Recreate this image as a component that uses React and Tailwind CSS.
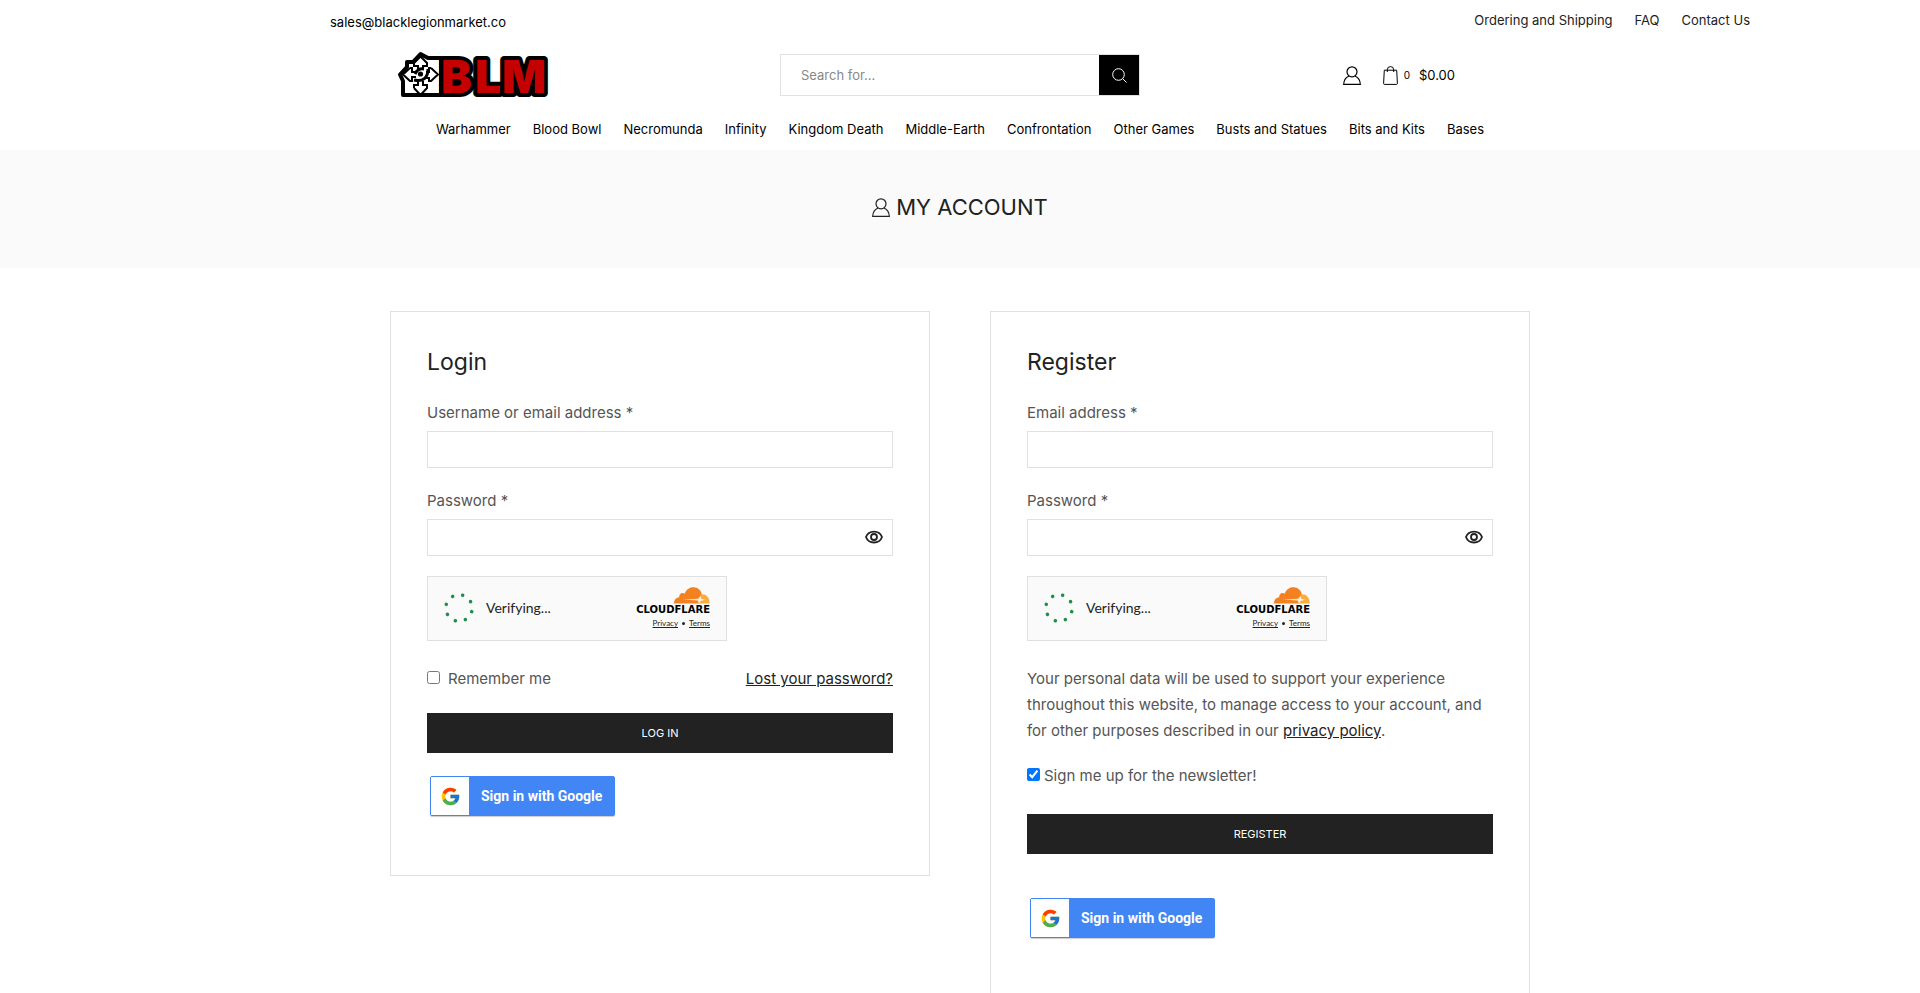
import { useState } from "react";
import { FcGoogle } from "react-icons/fc";

const topLinks = ["Ordering and Shipping", "FAQ", "Contact Us"];

const navLinks = [
  "Warhammer",
  "Blood Bowl",
  "Necromunda",
  "Infinity",
  "Kingdom Death",
  "Middle-Earth",
  "Confrontation",
  "Other Games",
  "Busts and Statues",
  "Bits and Kits",
  "Bases",
];

const spinnerDots = [0, 45, 90, 135, 180, 225, 270, 315];

function UserIcon() {
  return (
    <svg viewBox="0 0 18 19" className="w-[18px] h-[19px]" fill="none" stroke="currentColor" strokeWidth="1.200" aria-hidden="true">
      <circle cx="9" cy="5.800" r="5" />
      <path d="M6 10C3 11.300 .9 14 .7 18.300H17.300C17.100 14 15 11.300 12 10" />
    </svg>
  );
}

function BagIcon() {
  return (
    <svg viewBox="0 0 15 19" className="w-[15px] h-[19px]" fill="none" stroke="currentColor" aria-hidden="true">
      <path d="M1.300 4.200H13.700L14.400 17.400Q14.400 18.400 13.400 18.400H1.600Q.6 18.400 .6 17.400Z" />
      <path d="M4.300 6V3.800a3.200 3.200 0 0 1 6.400 0V6" />
    </svg>
  );
}

function Logo() {
  return (
    <svg viewBox="0 0 150 46" className="w-[150px] h-[46px] overflow-visible" role="img" aria-label="BLM">
      <path
        d="M22.500 2L30 6H43V43H5V29L2 22.500L9 15V10H15Z"
        fill="#fff"
        stroke="#000"
        strokeWidth="4"
        strokeLinejoin="round"
      />
      <g fill="none" stroke="#000" strokeWidth="2">
        <path d="M16 11L22.500 4.500L29 11V14H25V18M16 11V14H20V17" />
        <path d="M12 16L5 22.500L12 29H14V25H18M12 16H14V20H17" />
        <path d="M33 16L40 22.500L33 29H31V26H28M33 16H31V20H28" />
        <path d="M16 36L22.500 43L29 36V33H25V29M16 36V33H20V29" />
        <path d="M30 17C30 26 25 30 16 28" strokeWidth="3" />
        <path d="M17 22Q20 16 26 17" strokeWidth="3" />
      </g>
      <circle cx="22.500" cy="22" r="2.600" fill="#000" />
      <text
        x="43 77 104"
        y="41"
        fill="#c40000"
        stroke="#000"
        strokeWidth="8"
        strokeLinejoin="round"
        paintOrder="stroke"
        className="font-[Inter] text-[46px] font-black"
      >
        BLM
      </text>
    </svg>
  );
}

function EyeIcon() {
  return (
    <svg viewBox="0 0 18 14" className="w-[18px] h-[14px]" fill="none" stroke="currentColor" strokeWidth="1.800" aria-hidden="true">
      <path d="M1 7C3.500 -.3 14.500 -.3 17 7C14.500 14.300 3.500 14.300 1 7Z" />
      <circle cx="9" cy="7" r="3" />
    </svg>
  );
}

function Field({ id, label, type = "text" }) {
  return (
    <div className="mb-5">
      <label htmlFor={id} className="block mb-[5px]">
        {label}
      </label>
      <input
        id={id}
        type={type}
        className="block w-full h-[37px] px-3 border border-[#e1e1e1] bg-white outline-none focus:border-[#222]"
      />
    </div>
  );
}

function PasswordField({ id }) {
  const [visible, setVisible] = useState(false);

  return (
    <div className="mb-5">
      <label htmlFor={id} className="block mb-[5px]">
        Password *
      </label>
      <div className="flex h-[37px] border border-[#e1e1e1] bg-white focus-within:border-[#222]">
        <input
          id={id}
          type={visible ? "text" : "password"}
          className="flex-1 min-w-0 px-3 outline-none"
        />
        <button
          type="button"
          aria-label="Show password"
          onClick={() => setVisible(!visible)}
          className="px-[9px] pb-[2px] text-[#222]"
        >
          <EyeIcon />
        </button>
      </div>
    </div>
  );
}

function Turnstile() {
  return (
    <div className="flex items-center w-[300px] max-w-full h-[65px] px-4 pb-[2px] mb-[25px] border border-[#e0e0e0] bg-[#fafafa] font-[Lato,sans-serif] text-[#232323]">
      <svg viewBox="0 0 32 32" className="w-[30px] h-[30px]" aria-hidden="true">
        {spinnerDots.map((angle) => (
          <circle key={angle} cx="16" cy="1.900" r="1.900" fill="#1e8e49" transform={`rotate(${angle + 16} 16 16)`} />
        ))}
      </svg>
      <span className="ml-3 text-sm">Verifying...</span>
      <div className="ml-auto flex flex-col items-end">
        <svg viewBox="0 0 36 17" className="w-[36px] h-[17px]" aria-hidden="true">
          <path d="M25 16.500H0C0 12.500 2.500 10.500 5.200 10.300C4.800 6.500 8 5 10.800 6.500C12.500 2 16 .3 19.500 .3C24 .3 27.300 3.500 28 8Z" fill="#f4811f" />
          <path d="M24.500 16.500L26.500 7.500C32 6.500 35.500 10 35.600 16.500Z" fill="#faad3f" />
          <path d="M9 12.500L24 11.800L26.500 9L27.300 12L31 12.800L26.800 14L25 16.500L23.500 13.400Z" fill="#fff" opacity=".8" />
        </svg>
        <span className="font-['DejaVu_Sans',sans-serif] text-[10px] leading-[12px] font-bold text-black">CLOUDFLARE</span>
        <div className="mt-[2px] flex items-center gap-1 text-[8px] leading-[10px]">
          <a href="#privacy" className="underline">Privacy</a>
          <span className="w-[3px] h-[3px] rounded-full bg-[#232323]" />
          <a href="#terms" className="underline">Terms</a>
        </div>
      </div>
    </div>
  );
}

function GoogleButton() {
  return (
    <button
      type="button"
      className="flex items-center ml-[3px] h-10 rounded-[2px] border border-[#4285f4] bg-[#4285f4] pr-3 shadow-[0_1px_1px_rgba(0,0,0,0.2)]"
    >
      <span className="flex items-center justify-center w-[38px] h-[38px] bg-white">
        <FcGoogle className="w-[21px] h-[21px]" />
      </span>
      <span className="ml-3 font-[Roboto,sans-serif] text-sm font-bold text-white">Sign in with Google</span>
    </button>
  );
}

function Header() {
  return (
    <header className="text-[13px] text-black">
      <div className="flex justify-between pt-[10px] pl-[330px] pr-[170px] h-[42px] leading-5">
        <a href="mailto:sales@blacklegionmarket.co" className="pt-[2px]">
          sales@blacklegionmarket.co
        </a>
        <div className="flex gap-[22px] text-[#222]">
          {topLinks.map((link) => (
            <a key={link} href="#page">{link}</a>
          ))}
        </div>
      </div>

      <div className="max-w-[1140px] mx-auto h-[66px] grid grid-cols-[1fr_360px_1fr] items-center">
        <a href="#home" className="pl-2">
          <Logo />
        </a>
        <form className="flex h-[42px] border border-[#e1e1e1]" onSubmit={(e) => e.preventDefault()}>
          <input
            type="text"
            aria-label="Search"
            placeholder="Search for..."
            className="flex-1 min-w-0 px-5 outline-none placeholder:text-[#888]"
          />
          <button type="submit" aria-label="Search" className="flex items-center justify-center w-10 bg-black text-white">
            <svg viewBox="0 0 15 15" className="w-[15px] h-[15px]" fill="none" stroke="currentColor" aria-hidden="true">
              <circle cx="6.500" cy="6.500" r="5.800" />
              <path d="M10.700 10.700L14.500 14.500" />
            </svg>
          </button>
        </form>
        <div className="flex items-center justify-end pr-[75px]">
          <a href="#account" aria-label="My account">
            <UserIcon />
          </a>
          <a href="#cart" className="flex items-center ml-[22px]">
            <BagIcon />
            <span className="ml-[6px] text-[10px]">0</span>
            <span className="ml-[9px]">$0.00</span>
          </a>
        </div>
      </div>

      <nav className="flex justify-center gap-[22px] h-[42px] pt-[11px] leading-5">
        {navLinks.map((link) => (
          <a key={link} href="#category">{link}</a>
        ))}
      </nav>
    </header>
  );
}

function LoginCard() {
  return (
    <form className="border border-[#e1e1e1] px-9 pt-9 pb-[59px]" onSubmit={(e) => e.preventDefault()}>
      <h2 className="mb-6 text-[23px] leading-7 text-[#222]">Login</h2>
      <Field id="login-user" label="Username or email address *" />
      <PasswordField id="login-password" />
      <Turnstile />
      <div className="flex justify-between">
        <label className="flex items-center">
          <input type="checkbox" className="mr-2 mb-[3px] w-[13px] h-[13px]" />
          Remember me
        </label>
        <a href="#lost-password" className="text-[#222] underline">
          Lost your password?
        </a>
      </div>
      <button type="submit" className="block w-full h-10 mt-[21px] mb-[23px] bg-[#222] text-[11px] text-white uppercase">
        Log in
      </button>
      <GoogleButton />
    </form>
  );
}

function RegisterCard() {
  return (
    <form className="border border-[#e1e1e1] px-9 pt-9 pb-[59px]" onSubmit={(e) => e.preventDefault()}>
      <h2 className="mb-6 text-[23px] leading-7 text-[#222]">Register</h2>
      <Field id="register-email" label="Email address *" type="email" />
      <PasswordField id="register-password" />
      <Turnstile />
      <p>
        Your personal data will be used to support your experience throughout this website, to manage
        access to your account, and for other purposes described in our{" "}
        <a href="#privacy-policy" className="text-[#222] underline">
          privacy policy
        </a>
        .
      </p>
      <label className="flex items-center mt-[19px]">
        <input type="checkbox" defaultChecked className="mr-1 mb-[3px] w-[13px] h-[13px]" />
        Sign me up for the newsletter!
      </label>
      <button type="submit" className="block w-full h-10 mt-[25px] mb-11 bg-[#222] text-[11px] text-white uppercase">
        Register
      </button>
      <GoogleButton />
    </form>
  );
}

export default function App() {
  return (
    <div className="min-h-screen bg-white font-[Inter,sans-serif] text-[15px] leading-[26px] text-[#555]">
      <Header />

      <div className="flex items-center justify-center gap-[6px] h-[118px] pb-1 bg-[#fafafa] text-[#222]">
        <UserIcon />
        <h1 className="text-[22px] uppercase">My account</h1>
      </div>

      <main className="max-w-[1140px] mx-auto mt-[43px] grid grid-cols-2 items-start gap-[60px]">
        <LoginCard />
        <RegisterCard />
      </main>
    </div>
  );
}
